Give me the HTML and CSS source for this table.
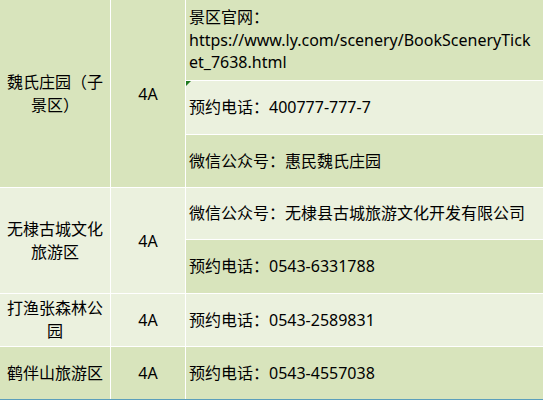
FILE: index.html
```html
<!DOCTYPE html>
<html lang="zh-CN">
<head>
<meta charset="utf-8">
<title>景区列表</title>
<link rel="stylesheet" href="styles.css">
</head>
<body>
<div class="sheet">
  <div class="cell name g1 green">魏氏庄园（子景区）</div>
  <div class="cell level g1 green">4A</div>
  <div class="cell info green r1"><span class="lines">景区官网：<br>https://www.ly.com/scenery/BookSceneryTick<br>et_7638.html</span></div>
  <div class="cell info light r2 flagged">预约电话：400777-777-7</div>
  <div class="cell info green r3">微信公众号：惠民魏氏庄园</div>

  <div class="cell name g2 light">无棣古城文化旅游区</div>
  <div class="cell level g2 light">4A</div>
  <div class="cell info light r4">微信公众号：无棣县古城旅游文化开发有限公司</div>
  <div class="cell info green r5">预约电话：0543-6331788</div>

  <div class="cell name g3 light">打渔张森林公园</div>
  <div class="cell level g3 light">4A</div>
  <div class="cell info light r6">预约电话：0543-2589831</div>

  <div class="cell name g4 green">鹤伴山旅游区</div>
  <div class="cell level g4 green">4A</div>
  <div class="cell info green r7">预约电话：0543-4557038</div>
</div>
</body>
</html>
```

FILE: styles.css
```css
html, body {
  margin: 0;
  padding: 0;
  background: #ffffff;
}

body {
  font-family: "Noto Sans", "Noto Sans CJK SC", sans-serif;
  font-size: 16px;
  color: #000000;
  width: 543px;
  height: 400px;
  overflow: hidden;
}

.sheet {
  display: grid;
  grid-template-columns: 110px 74px 1fr;
  grid-template-rows: 80px 53px 52px 51px 53px 52px 52px;
  gap: 1px;
  background: #ffffff;
  border-bottom: 1px solid #5b9fbc;
  width: 543px;
}

.cell {
  display: flex;
  align-items: center;
  overflow: hidden;
  position: relative;
}

.green { background: #d8e4bc; }
.light { background: #ebf1de; }

.name {
  grid-column: 1;
  justify-content: center;
  text-align: center;
  padding: 0 3px;
  line-height: 23px;
}

.level {
  grid-column: 2;
  justify-content: center;
  text-align: center;
}

.info {
  grid-column: 3;
  padding-left: 3px;
  white-space: nowrap;
  line-height: 22.5px;
}

.g1 { grid-row: 1 / 4; }
.g2 { grid-row: 4 / 6; }
.g3 { grid-row: 6; }
.g4 { grid-row: 7; }

.r1 { grid-row: 1; }
.r2 { grid-row: 2; }
.r3 { grid-row: 3; }
.r4 { grid-row: 4; }
.r5 { grid-row: 5; }
.r6 { grid-row: 6; }
.r7 { grid-row: 7; }

.flagged::before {
  content: "";
  position: absolute;
  left: 0;
  top: 0;
  border-top: 5px solid #1f7a1f;
  border-right: 5px solid transparent;
}
```
